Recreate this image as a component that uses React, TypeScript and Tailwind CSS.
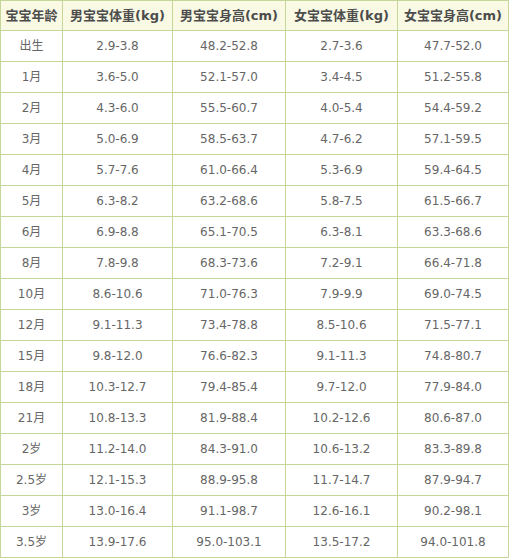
const headers = ['宝宝年龄', '男宝宝体重(kg)', '男宝宝身高(cm)', '女宝宝体重(kg)', '女宝宝身高(cm)']

const rows: string[][] = [
  ['出生', '2.9-3.8', '48.2-52.8', '2.7-3.6', '47.7-52.0'],
  ['1月', '3.6-5.0', '52.1-57.0', '3.4-4.5', '51.2-55.8'],
  ['2月', '4.3-6.0', '55.5-60.7', '4.0-5.4', '54.4-59.2'],
  ['3月', '5.0-6.9', '58.5-63.7', '4.7-6.2', '57.1-59.5'],
  ['4月', '5.7-7.6', '61.0-66.4', '5.3-6.9', '59.4-64.5'],
  ['5月', '6.3-8.2', '63.2-68.6', '5.8-7.5', '61.5-66.7'],
  ['6月', '6.9-8.8', '65.1-70.5', '6.3-8.1', '63.3-68.6'],
  ['8月', '7.8-9.8', '68.3-73.6', '7.2-9.1', '66.4-71.8'],
  ['10月', '8.6-10.6', '71.0-76.3', '7.9-9.9', '69.0-74.5'],
  ['12月', '9.1-11.3', '73.4-78.8', '8.5-10.6', '71.5-77.1'],
  ['15月', '9.8-12.0', '76.6-82.3', '9.1-11.3', '74.8-80.7'],
  ['18月', '10.3-12.7', '79.4-85.4', '9.7-12.0', '77.9-84.0'],
  ['21月', '10.8-13.3', '81.9-88.4', '10.2-12.6', '80.6-87.0'],
  ['2岁', '11.2-14.0', '84.3-91.0', '10.6-13.2', '83.3-89.8'],
  ['2.5岁', '12.1-15.3', '88.9-95.8', '11.7-14.7', '87.9-94.7'],
  ['3岁', '13.0-16.4', '91.1-98.7', '12.6-16.1', '90.2-98.1'],
  ['3.5岁', '13.9-17.6', '95.0-103.1', '13.5-17.2', '94.0-101.8'],
]

const font = { fontFamily: '"DejaVu Sans", "Noto Sans CJK SC", sans-serif' }

export default function App() {
  return (
    <div className="bg-white w-[510px] h-[559px]" style={font}>
      <div className="grid grid-cols-[62px_110px_113px_112px_111px] w-[509px] border-l border-t border-[#c5d69b]">
        {headers.map((h) => (
          <div
            key={h}
            className="h-[30px] flex items-center justify-center border-r border-b border-[#c5d69b] bg-[#f9f9e4] text-[13px] font-bold text-[#4d4d4d]"
          >
            {h}
          </div>
        ))}
        {rows.map((r) =>
          r.map((c, i) => (
            <div
              key={r[0] + i}
              className="h-[31px] flex items-center justify-center border-r border-b border-[#c5d69b] text-[12px] text-[#666666]"
            >
              {c}
            </div>
          ))
        )}
      </div>
    </div>
  )
}
